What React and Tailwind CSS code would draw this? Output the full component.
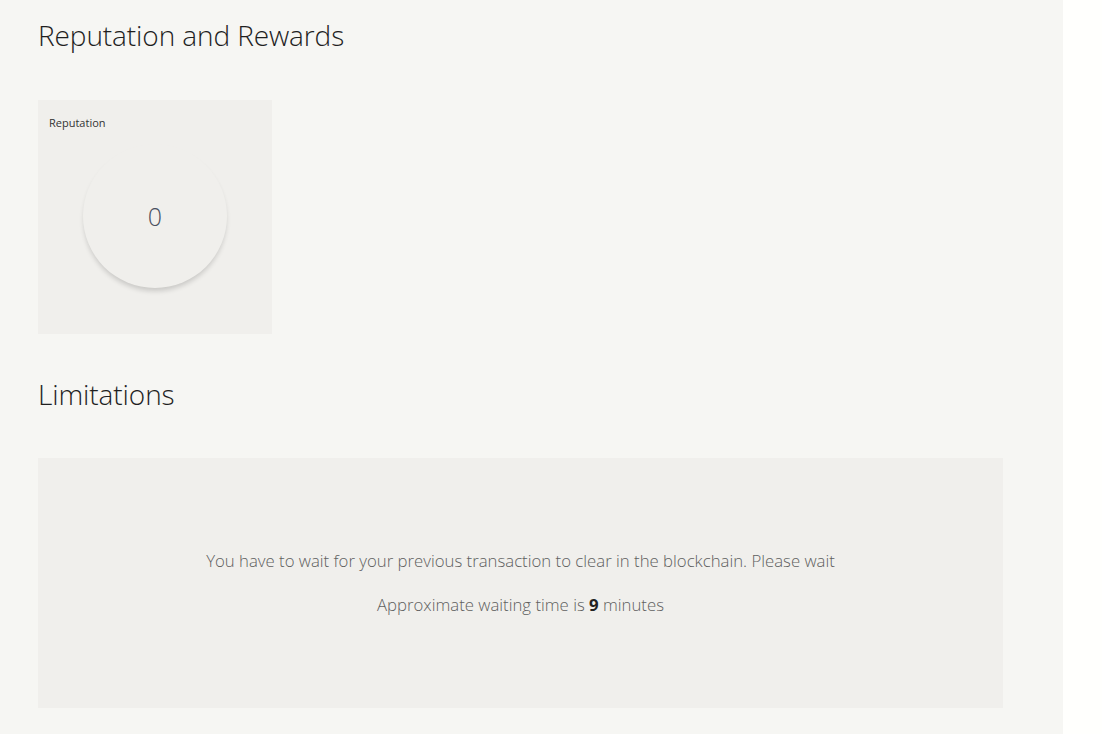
export default function App() {
  return (
    <div className="flex h-[734px] w-full">
      <div className="w-[1063px] h-full bg-[#f6f6f3] px-[38px] font-['Open_Sans',sans-serif] font-light">
        <h1 className="pt-[17px] text-[28px] leading-[36px] text-[#1f1f1f] font-light tracking-[-0.1px]">Reputation and Rewards</h1>

        <div className="mt-[47px] w-[234px] h-[234px] bg-[#f0efec] flex flex-col px-[11px] pt-[15px]">
          <div className="text-[11px] leading-[16px] text-[#333] font-normal">Reputation</div>
          <div className="mt-[13px] mx-auto w-[144px] h-[144px] rounded-full bg-[#f0efec] shadow-[0_4px_5px_-1px_rgba(0,0,0,0.16)] flex items-center justify-center">
            <span className="text-[25px] leading-none text-[#4a5060] font-light">0</span>
          </div>
        </div>

        <h2 className="mt-[42px] text-[28px] leading-[36px] text-[#1f1f1f] font-light tracking-[-0.1px]">Limitations</h2>

        <div className="mt-[46px] w-[965px] h-[250px] bg-[#f0efec] flex flex-col items-center justify-center gap-[20px] text-[16.75px] leading-[24px] text-[#5f5f5f]">
          <p>You have to wait for your previous transaction to clear in the blockchain. Please wait</p>
          <p>Approximate waiting time is <b className="font-bold text-[#222]">9</b> minutes</p>
        </div>
      </div>
      <div className="flex-1 h-full bg-[#fffffd]" />
    </div>
  )
}
